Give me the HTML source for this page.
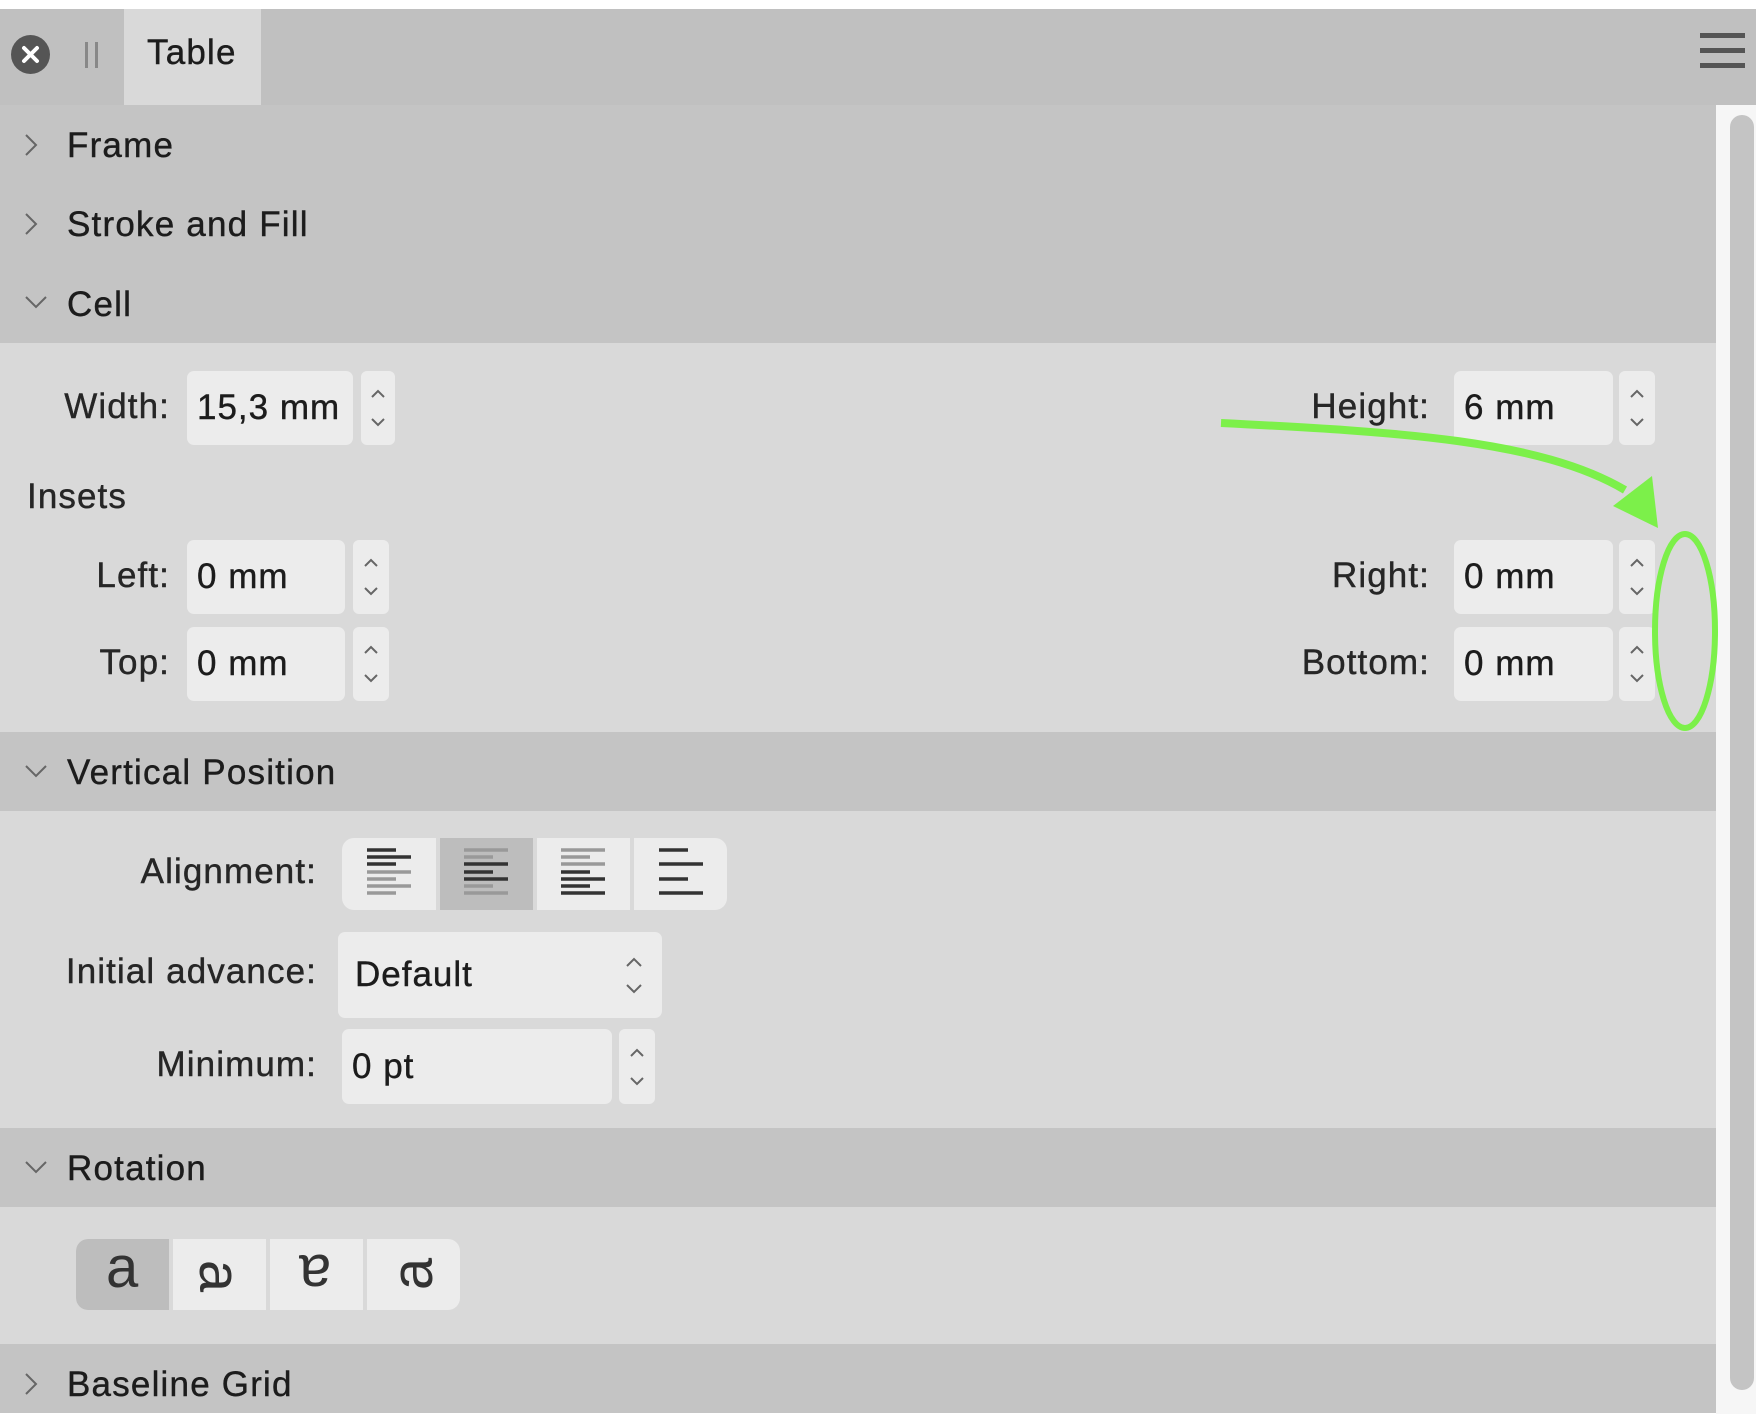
<!DOCTYPE html>
<html><head><meta charset="utf-8"><style>
*{margin:0;padding:0;box-sizing:border-box}
body{width:1756px;height:1414px;background:#fff;position:relative;overflow:hidden;font-family:"Liberation Sans",sans-serif;color:#1c1c1c}
.a{position:absolute}
.hdr{position:absolute;left:0;width:1716px;background:#c4c4c4}
.cnt{position:absolute;left:0;width:1716px;background:#d9d9d9}
.ht{position:absolute;left:67px;font-size:35px;line-height:1;letter-spacing:1.2px;-webkit-text-stroke:0.4px #1c1c1c}
.chev{position:absolute;left:24px}
.lbl{position:absolute;font-size:35px;line-height:1;text-align:right;color:#262626;letter-spacing:1.1px;-webkit-text-stroke:0.4px #262626}
.fld{position:absolute;background:#ececec;border-radius:7px;font-size:35px;padding-left:10px;display:flex;align-items:center;letter-spacing:1px;-webkit-text-stroke:0.4px #1c1c1c}
.stp{position:absolute;background:#ececec;border-radius:6px}
.stp svg{position:absolute;left:50%;top:50%;margin-left:-9px;margin-top:-21px}
</style></head><body>
<svg width="0" height="0" style="position:absolute"><defs>
<path id="r" d="M2 2L12 12L2 22" fill="none" stroke="#666" stroke-width="2"/>
<path id="d" d="M2 6L12 16L22 6" fill="none" stroke="#666" stroke-width="2"/>
<path id="ud" d="M3 10L9 4L15 10M3 32L9 38L15 32" fill="none" stroke="#666" stroke-width="2"/>
</defs></svg>
<!-- top bar -->
<div class="a" style="left:0;top:9px;width:1756px;height:96px;background:#c0c0c0"></div>
<div class="a" style="left:124px;top:9px;width:137px;height:96px;background:#d9d9d9"></div>
<div class="a" style="left:11px;top:35px;width:39px;height:39px;border-radius:50%;background:#555"></div>
<svg class="a" style="left:11px;top:35px" width="39" height="39"><path d="M13 13L26 26M26 13L13 26" stroke="#fff" stroke-width="4" stroke-linecap="round"/></svg>
<div class="a" style="left:85px;top:42px;width:3px;height:26px;background:#888"></div>
<div class="a" style="left:95px;top:42px;width:3px;height:26px;background:#888"></div>
<div class="a" style="left:147px;top:35px;font-size:35px;line-height:1;letter-spacing:1.2px;-webkit-text-stroke:0.4px #1c1c1c">Table</div>
<div class="a" style="left:1700px;top:33px;width:45px;height:5px;background:#555"></div>
<div class="a" style="left:1700px;top:48px;width:45px;height:5px;background:#555"></div>
<div class="a" style="left:1700px;top:63px;width:45px;height:5px;background:#555"></div>
<!-- scrollbar -->
<div class="a" style="left:1716px;top:105px;width:40px;height:1309px;background:#f6f6f6"></div>
<div class="a" style="left:1730px;top:115px;width:24px;height:1275px;border-radius:12px;background:#c4c4c4"></div>

<div class="hdr" style="top:105px;height:238px"></div>
<svg class="chev" style="top:133px" width="24" height="24"><use href="#r"/></svg>
<div class="ht" style="top:128px">Frame</div>
<svg class="chev" style="top:212px" width="24" height="24"><use href="#r"/></svg>
<div class="ht" style="top:207px">Stroke and Fill</div>
<svg class="chev" style="top:291px" width="24" height="24"><use href="#d"/></svg>
<div class="ht" style="top:287px">Cell</div>

<div class="cnt" style="top:343px;height:389px"></div>
<div class="lbl" style="right:1586px;top:389px">Width:</div>
<div class="fld" style="left:187px;top:371px;width:166px;height:74px">15,3 mm</div>
<div class="stp" style="left:361px;top:371px;width:34px;height:74px"><svg width="18" height="42"><use href="#ud"/></svg></div>
<div class="lbl" style="right:326px;top:389px">Height:</div>
<div class="fld" style="left:1454px;top:371px;width:159px;height:74px">6 mm</div>
<div class="stp" style="left:1619px;top:371px;width:36px;height:74px"><svg width="18" height="42"><use href="#ud"/></svg></div>
<div class="lbl" style="left:27px;top:479px;text-align:left">Insets</div>
<div class="lbl" style="right:1586px;top:558px">Left:</div>
<div class="fld" style="left:187px;top:540px;width:158px;height:74px">0 mm</div>
<div class="stp" style="left:353px;top:540px;width:36px;height:74px"><svg width="18" height="42"><use href="#ud"/></svg></div>
<div class="lbl" style="right:1586px;top:645px">Top:</div>
<div class="fld" style="left:187px;top:627px;width:158px;height:74px">0 mm</div>
<div class="stp" style="left:353px;top:627px;width:36px;height:74px"><svg width="18" height="42"><use href="#ud"/></svg></div>
<div class="lbl" style="right:326px;top:558px">Right:</div>
<div class="fld" style="left:1454px;top:540px;width:159px;height:74px">0 mm</div>
<div class="stp" style="left:1619px;top:540px;width:36px;height:74px"><svg width="18" height="42"><use href="#ud"/></svg></div>
<div class="lbl" style="right:326px;top:645px">Bottom:</div>
<div class="fld" style="left:1454px;top:627px;width:159px;height:74px">0 mm</div>
<div class="stp" style="left:1619px;top:627px;width:36px;height:74px"><svg width="18" height="42"><use href="#ud"/></svg></div>

<div class="hdr" style="top:732px;height:79px"></div>
<svg class="chev" style="top:760px" width="24" height="24"><use href="#d"/></svg>
<div class="ht" style="top:755px">Vertical Position</div>

<div class="cnt" style="top:811px;height:317px"></div>
<div class="lbl" style="right:1439px;top:854px">Alignment:</div>
<div class="a" style="left:342px;top:838px;width:385px;height:72px;border-radius:12px;background:#ececec;overflow:hidden">
<div class="a" style="left:94px;top:0;width:4px;height:72px;background:#d9d9d9"></div>
<div class="a" style="left:98px;top:0;width:93px;height:72px;background:#bdbdbd"></div>
<div class="a" style="left:191px;top:0;width:4px;height:72px;background:#d9d9d9"></div>
<div class="a" style="left:288px;top:0;width:4px;height:72px;background:#d9d9d9"></div>
<svg class="a" style="left:0;top:0" width="385" height="72" stroke-width="3.5">
<g stroke="#333"><path d="M25 12H54M25 19H69M25 26H54"/></g>
<g stroke="#999"><path d="M25 34H69M25 41H54M25 48H69M25 55H54"/></g>
<g stroke="#999"><path d="M122 12H166M122 19H151M122 48H151M122 55H166"/></g>
<g stroke="#333"><path d="M122 26H166M122 34H151M122 41H166"/></g>
<g stroke="#999"><path d="M219 12H263M219 19H248M219 26H263"/></g>
<g stroke="#333"><path d="M219 34H248M219 41H263M219 48H248M219 55H263"/></g>
<g stroke="#333"><path d="M317 12H346M317 26H361M317 41H346M317 55H361"/></g>
</svg></div>
<div class="lbl" style="right:1439px;top:954px">Initial advance:</div>
<div class="fld" style="left:338px;top:932px;width:324px;height:86px;padding-left:17px">Default</div>
<svg class="a" style="left:622px;top:955px" width="24" height="42"><path d="M5 11L12 4L19 11M5 30L12 37L19 30" fill="none" stroke="#666" stroke-width="2"/></svg>
<div class="lbl" style="right:1439px;top:1047px">Minimum:</div>
<div class="fld" style="left:342px;top:1029px;width:270px;height:75px">0 pt</div>
<div class="stp" style="left:619px;top:1029px;width:36px;height:75px"><svg width="18" height="42"><use href="#ud"/></svg></div>

<div class="hdr" style="top:1128px;height:79px"></div>
<svg class="chev" style="top:1156px" width="24" height="24"><use href="#d"/></svg>
<div class="ht" style="top:1151px">Rotation</div>

<div class="cnt" style="top:1207px;height:137px"></div>
<div class="a" style="left:76px;top:1239px;width:384px;height:71px;border-radius:12px;background:#ececec;overflow:hidden;font-size:58px;line-height:58px;color:#333">
<div class="a" style="left:0;top:0;width:93px;height:71px;background:#bdbdbd"></div>
<div class="a" style="left:93px;top:0;width:4px;height:71px;background:#d9d9d9"></div>
<div class="a" style="left:190px;top:0;width:4px;height:71px;background:#d9d9d9"></div>
<div class="a" style="left:287px;top:0;width:4px;height:71px;background:#d9d9d9"></div>
<div class="a" style="left:30px;top:0px">a</div>
<div class="a" style="left:127px;top:8px;transform:rotate(90deg)">a</div>
<div class="a" style="left:223px;top:6px;transform:rotate(180deg)">a</div>
<div class="a" style="left:321px;top:6px;transform:rotate(-90deg)">a</div>
</div>

<div class="hdr" style="top:1344px;height:69px"></div>
<svg class="chev" style="top:1372px" width="24" height="24"><use href="#r"/></svg>
<div class="ht" style="top:1367px">Baseline Grid</div>

<!-- green annotation -->
<svg class="a" style="left:0;top:0" width="1756" height="1414">
<path d="M1221 423C1400 432 1540 440 1625 490" fill="none" stroke="#7cf04a" stroke-width="8"/>
<path d="M1613 506L1652 476L1658 528Z" fill="#7cf04a"/>
<ellipse cx="1685" cy="631" rx="30" ry="97" fill="none" stroke="#7cf04a" stroke-width="6"/>
</svg>
</body></html>
